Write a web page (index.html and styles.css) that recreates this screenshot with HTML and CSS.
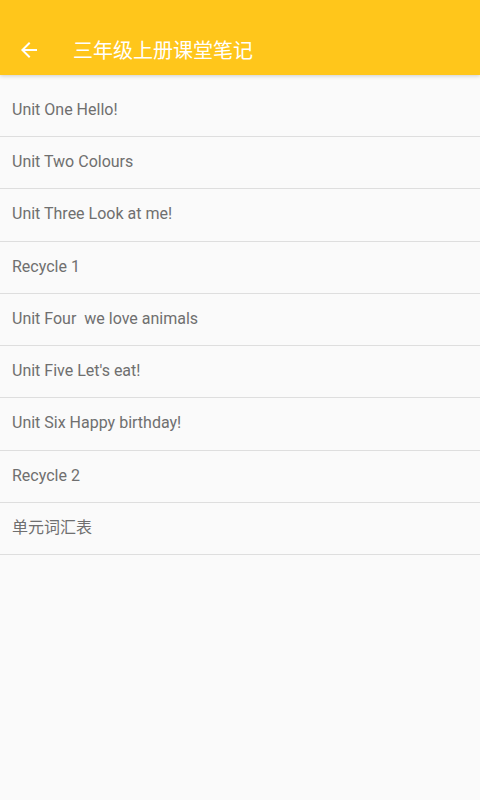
FILE: index.html
```html
<!DOCTYPE html>
<html lang="zh-CN">
  <head>
    <meta charset="UTF-8" />
    <meta name="viewport" content="width=device-width, initial-scale=1.0" />
    <title>三年级上册课堂笔记</title>
    <link rel="stylesheet" href="styles.css">
  </head>
  <body>
    <header class="toolbar">
      <svg class="back" viewBox="0 0 24 24" width="24" height="24">
        <path d="M20 11H7.83l5.59-5.59L12 4l-8 8 8 8 1.41-1.41L7.83 13H20v-2z" fill="#fff" />
      </svg>
      <h1 class="title">三年级上册课堂笔记</h1>
    </header>

    <ul class="list">
      <li>Unit One Hello!</li>
      <li>Unit Two Colours</li>
      <li>Unit Three Look at me!</li>
      <li>Recycle 1</li>
      <li>Unit Four&nbsp; we love animals</li>
      <li>Unit Five Let's eat!</li>
      <li>Unit Six Happy birthday!</li>
      <li>Recycle 2</li>
      <li>单元词汇表</li>
    </ul>
  </body>
</html>
```

FILE: styles.css
```css
body {
  margin: 0;
  background: #fafafa;
  font-family: Roboto, "Noto Sans CJK SC", sans-serif;
  height: 800px;
  overflow: hidden;
}
.toolbar {
  background: #ffc61b;
  height: 51px;
  padding: 24px 0 0 17px;
  display: flex;
  align-items: center;
  box-shadow: 0 1px 4px rgba(0, 0, 0, 0.18);
  position: relative;
}
.back {
  display: block;
  flex-shrink: 0;
}
.title {
  margin: 0 0 0 32px;
  font-size: 20px;
  font-weight: normal;
  color: #fff;
}
.list {
  list-style: none;
  margin: 0;
  padding: 9.75px 0 0;
}
.list li {
  height: 49.25px;
  line-height: 49.25px;
  padding: 0 0 2px 12px;
  border-bottom: 1px solid #dedede;
  font-size: 16px;
  color: #6f6f6f;
  white-space: pre;
}
```
